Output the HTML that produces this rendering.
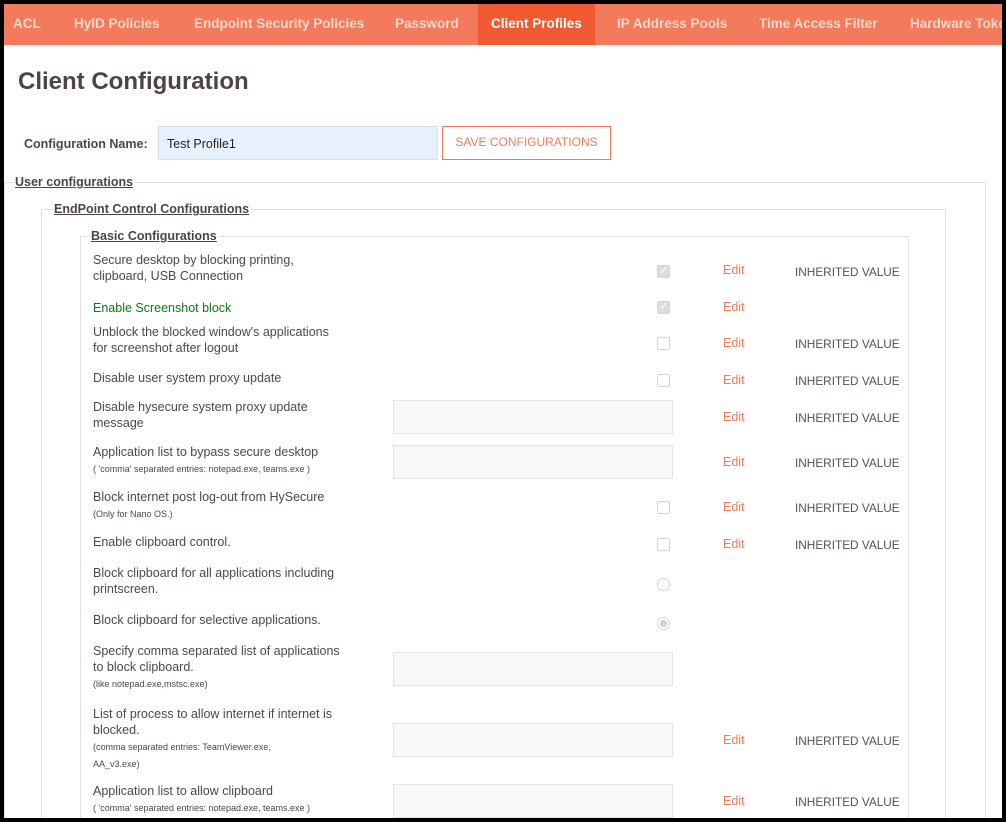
<!DOCTYPE html>
<html><head><meta charset="utf-8"><style>
*{margin:0;padding:0;box-sizing:border-box}
html,body{width:1006px;height:822px;overflow:hidden}
body{background:#000;position:relative;font-family:"Liberation Sans",sans-serif;color:#524646}
#page{position:absolute;left:4px;top:4px;width:998px;height:814px;background:#fff;overflow:hidden}
.nav{position:absolute;left:0;top:0;width:998px;height:41px;background:#f37b5c}
.nav span{position:absolute;top:12px;font-size:13.5px;font-weight:bold;color:#fbd9cc;white-space:nowrap}
.nav .act{background:#ef5a32;color:#fff;top:0;height:41px;line-height:40px;padding:0 13px}
.a{position:absolute;white-space:nowrap}
h1{position:absolute;left:14px;top:64px;font-size:24px;font-weight:bold;color:#4e4444}
.fs{position:absolute;border:1px solid #e2e2e2;border-bottom:none}
.lg{position:absolute;background:#fff;font-size:12.5px;font-weight:bold;text-decoration:underline;padding-right:2px;color:#4e4444}
.l{font-size:12.5px;line-height:16px}
.s{font-size:9px;line-height:15px}
.cb{position:absolute;width:13px;height:13px;border:1px solid #d6d6d6;border-radius:2px;background:#fff}
.cb.c{background:#dcdcdc}
.cb.c::after{content:"✓";position:absolute;left:1px;top:-2px;font-size:11px;color:#fff}
.rd{position:absolute;width:13px;height:13px;border:1px solid #d6d6d6;border-radius:50%}
.rd.c::after{content:"";position:absolute;left:2px;top:2px;width:7px;height:7px;border-radius:50%;background:#d0d0d0}
.in{position:absolute;width:280px;height:34px;border:1px solid #e4e4e4;background:#f8f8f8}
.e{position:absolute;font-size:12.5px;color:#f37b5c}
.iv{position:absolute;font-size:11.8px;color:#5a5050}
</style></head><body><div id="page">
<div class="nav">
<span style="left:9px">ACL</span>
<span style="left:70px">HyID Policies</span>
<span style="left:190px">Endpoint Security Policies</span>
<span style="left:391px">Password</span>
<span class="act" style="left:474px">Client Profiles</span>
<span style="left:613px">IP Address Pools</span>
<span style="left:755px">Time Access Filter</span>
<span style="left:906px">Hardware Tokens</span>
</div>
<h1>Client Configuration</h1>
<div class="a" style="left:20px;top:133px;font-size:12.5px;font-weight:bold;color:#4e4444">Configuration Name:</div>
<div class="a" style="left:154px;top:122px;width:280px;height:34px;background:#e8f0fe;border:1px solid #d8dfe8;font-size:12.5px;padding:10px 8px;color:#222">Test Profile1</div>
<div class="a" style="left:438px;top:122px;width:169px;height:34px;border:1px solid #f37b5c;color:#f37b5c;font-size:12px;text-align:center;line-height:30px">SAVE CONFIGURATIONS</div>

<div class="fs" style="left:0;top:178px;width:982px;height:640px"></div>
<div class="lg" style="left:11px;top:171px">User configurations</div>
<div class="fs" style="left:37px;top:205px;width:905px;height:610px"></div>
<div class="lg" style="left:50px;top:198px">EndPoint Control Configurations</div>
<div class="fs" style="left:76px;top:232px;width:829px;height:590px"></div>
<div class="lg" style="left:87px;top:225px">Basic Configurations</div>

<div class="a l" style="left:89px;top:248px">Secure desktop by blocking printing,<br>clipboard, USB Connection</div>
<div class="cb c" style="left:653px;top:261px"></div><div class="e" style="left:719px;top:259px">Edit</div><div class="iv" style="left:791px;top:261px">INHERITED VALUE</div>

<div class="a l" style="left:89px;top:296px;color:#0a7a16">Enable Screenshot block</div>
<div class="cb c" style="left:653px;top:297px"></div><div class="e" style="left:719px;top:296px">Edit</div>

<div class="a l" style="left:89px;top:320px">Unblock the blocked window's applications<br>for screenshot after logout</div>
<div class="cb" style="left:653px;top:333px"></div><div class="e" style="left:719px;top:332px">Edit</div><div class="iv" style="left:791px;top:333px">INHERITED VALUE</div>

<div class="a l" style="left:89px;top:366px">Disable user system proxy update</div>
<div class="cb" style="left:653px;top:370px"></div><div class="e" style="left:719px;top:369px">Edit</div><div class="iv" style="left:791px;top:370px">INHERITED VALUE</div>

<div class="a l" style="left:89px;top:395px">Disable hysecure system proxy update<br>message</div>
<div class="in" style="left:389px;top:396px"></div><div class="e" style="left:719px;top:406px">Edit</div><div class="iv" style="left:791px;top:407px">INHERITED VALUE</div>

<div class="a l" style="left:89px;top:440px">Application list to bypass secure desktop<br><span class="s">( 'comma' separated entries: notepad.exe, teams.exe )</span></div>
<div class="in" style="left:389px;top:441px"></div><div class="e" style="left:719px;top:451px">Edit</div><div class="iv" style="left:791px;top:452px">INHERITED VALUE</div>

<div class="a l" style="left:89px;top:485px">Block internet post log-out from HySecure<br><span class="s">(Only for Nano OS.)</span></div>
<div class="cb" style="left:653px;top:497px"></div><div class="e" style="left:719px;top:496px">Edit</div><div class="iv" style="left:791px;top:497px">INHERITED VALUE</div>

<div class="a l" style="left:89px;top:530px">Enable clipboard control.</div>
<div class="cb" style="left:653px;top:534px"></div><div class="e" style="left:719px;top:533px">Edit</div><div class="iv" style="left:791px;top:534px">INHERITED VALUE</div>

<div class="a l" style="left:89px;top:561px">Block clipboard for all applications including<br>printscreen.</div>
<div class="rd" style="left:653px;top:574px"></div>

<div class="a l" style="left:89px;top:608px">Block clipboard for selective applications.</div>
<div class="rd c" style="left:653px;top:613px"></div>

<div class="a l" style="left:89px;top:639px">Specify comma separated list of applications<br>to block clipboard.<br><span class="s">(like notepad.exe,mstsc.exe)</span></div>
<div class="in" style="left:389px;top:648px"></div>

<div class="a l" style="left:89px;top:702px">List of process to allow internet if internet is<br>blocked.<br><span class="s">(comma separated entries: TeamViewer.exe,<br>AA_v3.exe)</span></div>
<div class="in" style="left:389px;top:719px"></div><div class="e" style="left:719px;top:729px">Edit</div><div class="iv" style="left:791px;top:730px">INHERITED VALUE</div>

<div class="a l" style="left:89px;top:779px">Application list to allow clipboard<br><span class="s">( 'comma' separated entries: notepad.exe, teams.exe )</span></div>
<div class="in" style="left:389px;top:780px"></div><div class="e" style="left:719px;top:790px">Edit</div><div class="iv" style="left:791px;top:791px">INHERITED VALUE</div>
</div></body></html>
